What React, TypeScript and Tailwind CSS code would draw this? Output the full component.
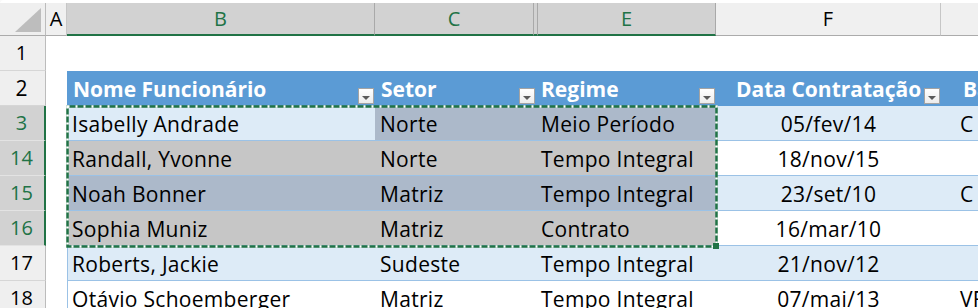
import React from "react";

type Band = "blue" | "white";
type DataRow = {
  n: number;
  band: Band;
  sel: boolean;
  active?: boolean;
  name: string;
  setor: string;
  regime: string;
  data: string;
  g: string;
};

const rows: DataRow[] = [
  { n: 3, band: "blue", sel: true, active: true, name: "Isabelly Andrade", setor: "Norte", regime: "Meio Período", data: "05/fev/14", g: "C" },
  { n: 14, band: "white", sel: true, name: "Randall, Yvonne", setor: "Norte", regime: "Tempo Integral", data: "18/nov/15", g: "" },
  { n: 15, band: "blue", sel: true, name: "Noah Bonner", setor: "Matriz", regime: "Tempo Integral", data: "23/set/10", g: "C" },
  { n: 16, band: "white", sel: true, name: "Sophia Muniz", setor: "Matriz", regime: "Contrato", data: "16/mar/10", g: "" },
  { n: 17, band: "blue", sel: false, name: "Roberts, Jackie", setor: "Sudeste", regime: "Tempo Integral", data: "21/nov/12", g: "" },
  { n: 18, band: "white", sel: false, name: "Otávio Schoemberger", setor: "Matriz", regime: "Tempo Integral", data: "07/mai/13", g: "VF" },
];

function bandBg(band: Band) {
  return band === "blue" ? "bg-[#ddebf7]" : "bg-white";
}

function selBg(band: Band) {
  return band === "blue" ? "bg-[#acb9ca]" : "bg-[#c6c6c6]";
}

function RowHeader({ n, sel }: { n: number; sel?: boolean }) {
  return (
    <div
      className={
        sel
          ? "flex w-[46px] shrink-0 items-center justify-center border-b border-r-2 border-b-[#e3e3e3] border-r-[#217346] bg-[#d2d2d2] pr-[1px] text-[#217346]"
          : "flex w-[46px] shrink-0 items-center justify-center border-b border-r border-b-[#d6d6d6] border-r-[#bcbcbc] bg-[#efefef] pr-[2px] text-black"
      }
    >
      {n}
    </div>
  );
}

function FilterButton() {
  return (
    <div className="mb-[2px] flex h-[16px] w-[16px] shrink-0 items-end justify-center self-end border border-[#a3a3a3] bg-gradient-to-b from-white to-[#ececec] pb-[3px]">
      <div className="h-0 w-0 border-x-[4px] border-t-[4px] border-x-transparent border-t-[#5a5a5a]" />
    </div>
  );
}

function ColHeader({ label, w, sel, extra = "" }: { label: string; w: string; sel?: boolean; extra?: string }) {
  return (
    <div
      className={`${w} flex shrink-0 items-center justify-center border-r ${
        sel ? "border-b-2 border-b-[#217346] border-r-[#a9a9a9] bg-[#d2d2d2] text-[#217346]" : "border-b border-b-[#ababab] border-r-[#c6c6c6] bg-[#f0f0f0] text-black"
      } ${extra}`}
    >
      {label}
    </div>
  );
}

export default function App() {
  return (
    <div className="relative h-[308px] w-[978px] overflow-hidden bg-white font-['Open_Sans','Noto_Sans',sans-serif] text-[20px] leading-none text-black">
      {/* strip left by the formula bar */}
      <div className="h-[3px] rounded-tl-[6px] bg-white shadow-[0_1px_2px_rgba(0,0,0,0.25)]" />

      {/* column letters */}
      <div className="flex h-[33px]">
        <div className="relative w-[46px] shrink-0 border-b border-r border-b-[#ababab] border-r-[#bcbcbc] bg-[#efefef]">
          <svg className="absolute left-0 top-0" width="46" height="33" viewBox="0 0 46 33">
            <polygon points="15,29 41,29 41,5" fill="#bdbdbd" />
          </svg>
        </div>
        <ColHeader label="A" w="w-[21px]" extra="bg-[#f0f0f0]" />
        <ColHeader label="B" w="w-[308px]" sel />
        <ColHeader label="C" w="w-[159px]" sel />
        <ColHeader label="" w="w-[4px]" sel />
        <ColHeader label="E" w="w-[178px]" sel />
        <ColHeader label="F" w="w-[225px]" />
        <ColHeader label="" w="w-[120px]" />
      </div>

      {/* row 1 */}
      <div className="flex h-[35px]">
        <RowHeader n={1} />
        <div className="flex-1" />
      </div>

      {/* row 2: table header */}
      <div className="flex h-[35px] text-[21px]">
        <RowHeader n={2} />
        <div className="w-[21px] shrink-0" />
        <div className="flex w-[308px] shrink-0 items-center bg-[#5b9bd5] pl-[6px] pr-[1px] font-bold text-white">
          <span className="flex-1 pt-[1px]">Nome Funcionário</span>
          <FilterButton />
        </div>
        <div className="flex w-[161px] shrink-0 items-center bg-[#5b9bd5] pl-[6px] pr-[1px] font-bold text-white">
          <span className="flex-1 pt-[1px]">Setor</span>
          <FilterButton />
        </div>
        <div className="flex w-[180px] shrink-0 items-center bg-[#5b9bd5] pl-[5px] pr-[1px] font-bold text-white">
          <span className="flex-1 pt-[1px]">Regime</span>
          <FilterButton />
        </div>
        <div className="flex w-[225px] shrink-0 items-center bg-[#5b9bd5] pl-[20px] pr-[1px] font-bold text-white">
          <span className="flex-1 whitespace-nowrap pt-[1px]">Data Contratação</span>
          <FilterButton />
        </div>
        <div className="flex flex-1 items-center bg-[#5b9bd5] pl-[22px] pt-[1px] font-bold text-white">Bairro</div>
      </div>

      {/* data rows */}
      {rows.map((r) => {
        const selCell = r.sel ? selBg(r.band) : bandBg(r.band);
        const nameCell = r.active ? bandBg(r.band) : selCell;
        return (
          <div key={r.n} className="flex h-[35px]">
            <RowHeader n={r.n} sel={r.sel} />
            <div className="w-[21px] shrink-0" />
            <div className="flex flex-1 text-[21px] tracking-[0.3px]">
              <div className={`flex w-[308px] shrink-0 items-center border-b border-l border-b-[#9bc2e6] border-l-[#9bc2e6] pl-[4px] pt-[2px] ${nameCell}`}>
                {r.name}
              </div>
              <div className={`flex w-[161px] shrink-0 items-center border-b border-b-[#9bc2e6] pl-[5px] pt-[2px] ${selCell}`}>{r.setor}</div>
              <div className={`flex w-[180px] shrink-0 items-center border-b border-b-[#9bc2e6] pl-[5px] pt-[2px] ${selCell}`}>{r.regime}</div>
              <div className={`flex w-[225px] shrink-0 items-center justify-center border-b border-b-[#9bc2e6] pt-[2px] ${bandBg(r.band)}`}>
                {r.data}
              </div>
              <div className={`flex flex-1 items-center border-b border-b-[#9bc2e6] pl-[19px] pt-[2px] ${bandBg(r.band)}`}>{r.g}</div>
            </div>
          </div>
        );
      })}

      {/* copy marquee around B3:E16 */}
      <svg className="pointer-events-none absolute left-[66px] top-[105px]" width="654" height="145" viewBox="0 0 654 145">
        <rect x="1.5" y="1.5" width="649" height="140" fill="none" stroke="#217346" strokeWidth="2.5" />
        <rect x="1.5" y="1.5" width="649" height="140" fill="none" stroke="#ffffff" strokeWidth="2.5" strokeDasharray="2 6" />
        <rect x="647" y="138" width="6" height="6" fill="#217346" />
      </svg>
    </div>
  );
}
